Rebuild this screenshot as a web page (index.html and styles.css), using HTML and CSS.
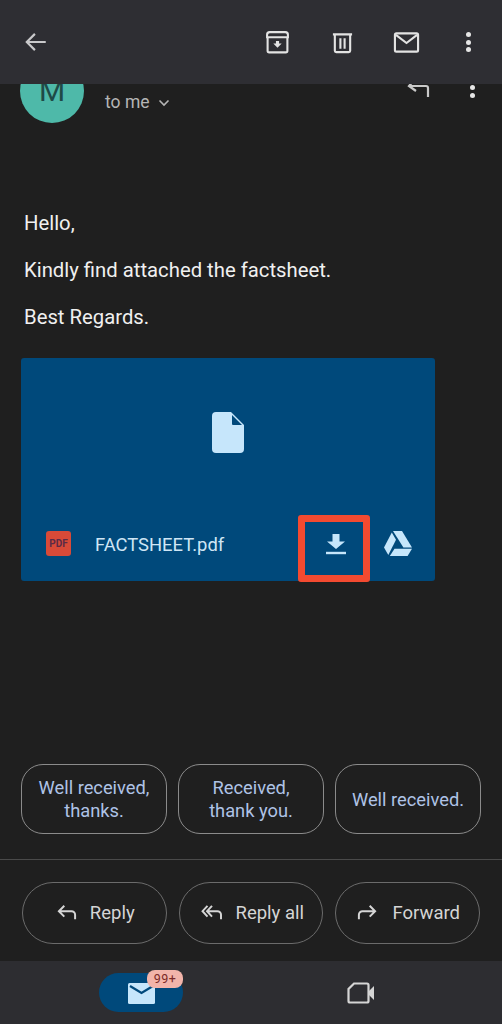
FILE: index.html
```html
<!DOCTYPE html>
<html lang="en">
<head>
<meta charset="utf-8">
<title>Email</title>
<link rel="stylesheet" href="styles.css">
</head>
<body>
<div class="app">
  <header class="topbar">
    <svg class="ic back" viewBox="0 0 24 24"><path d="M21 12H4M11 4.500L3.500 12l7.500 7.500" fill="none" stroke="#c9c9cb" stroke-width="2"/></svg>
    <div class="actions">
      <svg class="ic act-archive" viewBox="0 0 24 24"><path d="M2 8V4.500A2.500 2.500 0 0 1 4.500 2h15A2.500 2.500 0 0 1 22 4.500V8M2.500 7h19v13a1.500 1.500 0 0 1-1.500 1.500H4A1.500 1.500 0 0 1 2.500 20z" fill="none" stroke="#e3e3e3" stroke-width="2"/><path d="M10.500 10.500h3v2.500H16l-4 4-4-4h2.500z" fill="#e3e3e3"/></svg>
      <svg class="ic act-trash" viewBox="0 0 24 24"><path d="M2 3.500h20M4 3.500v17a1.500 1.500 0 0 0 1.500 1.500h13a1.500 1.500 0 0 0 1.500-1.500v-17M9.800 7.500v11M14.200 7.500v11" fill="none" stroke="#e3e3e3" stroke-width="2.200"/></svg>
      <svg class="ic act-mail" viewBox="0 0 28 24"><path d="M3.500 2.500h21A1.500 1.500 0 0 1 26 4v16a1.500 1.500 0 0 1-1.500 1.500h-21A1.500 1.500 0 0 1 2 20V4a1.500 1.500 0 0 1 1.500-1.500z" fill="none" stroke="#e3e3e3" stroke-width="2.200"/><path d="M3 4l11 8.500L25 4" fill="none" stroke="#e3e3e3" stroke-width="2.200"/></svg>
      <div class="dots"><i></i><i></i><i></i></div>
    </div>
  </header>

  <main class="thread">
    <div class="sender">
      <div class="avatar">M</div>
      <div class="to">to me <svg class="chev" viewBox="0 0 12 8"><path d="M1.500 1.500L6 6l4.500-4.500" fill="none" stroke="#b5b5b5" stroke-width="1.600"/></svg></div>
      <svg class="mini-reply" viewBox="0 0 24 22"><path d="M3 8h17a2 2 0 0 1 2 2v9M9 1L3 8l7 5" fill="none" stroke="#c9c9c9" stroke-width="2.200"/></svg>
      <div class="dots small"><i></i><i></i></div>
    </div>

    <div class="body-text">
      <p>Hello,</p>
      <p>Kindly find attached the factsheet.</p>
      <p>Best Regards.</p>
    </div>

    <section class="card">
      <div class="preview">
        <svg class="file" viewBox="0 0 32 41"><path d="M4 0h15l13 13v24a4 4 0 0 1-4 4H4a4 4 0 0 1-4-4V4a4 4 0 0 1 4-4z" fill="#c6e6fb"/><path d="M20 3v9a1 1 0 0 0 1 1h9z" fill="#00497b"/></svg>
      </div>
      <div class="card-foot">
        <div class="pdf">PDF</div>
        <div class="fname">FACTSHEET.pdf</div>
        <svg class="dl" viewBox="0 0 20 21"><path d="M6.500 0h7v7.500H19L10 15 1 7.500h5.500z" fill="#c6e6fb"/><path d="M0 19h20" stroke="#c6e6fb" stroke-width="2.400"/></svg>
        <svg class="drive" viewBox="0 0 28 25"><path d="M9 0h9l10 16.500h-8.600z" fill="#c6e6fb"/><path d="M7.800 1.500L12 8.800 4.300 24 0 16.500z" fill="#c6e6fb"/><path d="M10.500 17.800H28L23.600 25H5.800z" fill="#c6e6fb"/></svg>
        <div class="highlight"></div>
      </div>
    </section>
  </main>

  <div class="chips">
    <div class="chip">Well received,<br>thanks.</div>
    <div class="chip">Received,<br>thank you.</div>
    <div class="chip">Well received.</div>
  </div>

  <div class="replies">
    <div class="rbtn">
      <svg class="ric" viewBox="0 0 22 20"><path d="M8 2L2 8l6 6M2 8h14a4 4 0 0 1 4 4v5" fill="none" stroke="#d5d5d5" stroke-width="2.200"/></svg>
      <span>Reply</span>
    </div>
    <div class="rbtn">
      <svg class="ric wide" viewBox="0 0 24 20"><path d="M7 2L1.500 8 7 14M12 2L6.500 8l5.500 6M6.500 8H18a4 4 0 0 1 4 4v5" fill="none" stroke="#d5d5d5" stroke-width="2.200"/></svg>
      <span>Reply all</span>
    </div>
    <div class="rbtn fwd">
      <svg class="ric" viewBox="0 0 22 20"><path d="M14 2l6 6-6 6M20 8H6a4 4 0 0 0-4 4v5" fill="none" stroke="#d5d5d5" stroke-width="2.200"/></svg>
      <span>Forward</span>
    </div>
  </div>

  <nav class="bottom">
    <div class="slot">
      <div class="pill">
        <svg class="navmail" viewBox="0 0 27 21"><rect width="27" height="21" rx="1.500" fill="#c6e6fb"/><path d="M2 3l11.500 7L25 3" fill="none" stroke="#00497b" stroke-width="2.200"/></svg>
        <div class="badge">99+</div>
      </div>
    </div>
    <div class="slot">
      <svg class="meet" viewBox="0 0 28 22"><path d="M7 1.500h13a1.500 1.500 0 0 1 1.500 1.500v16a1.500 1.500 0 0 1-1.500 1.500H3A1.500 1.500 0 0 1 1.500 19V7z" fill="none" stroke="#d5d5d5" stroke-width="2.200"/><path d="M22 9l5-5v14l-5-5z" fill="#d5d5d5"/></svg>
    </div>
  </nav>
</div>
</body>
</html>
```

FILE: styles.css
```css
* { box-sizing: border-box; }
html, body { margin: 0; padding: 0; }
body { background: #1f1f1f; font-family: Roboto, "Liberation Sans", sans-serif; }
.app { width: 502px; height: 1024px; display: flex; flex-direction: column; overflow: hidden; background: #1f1f1f; }
.ic { display: block; }

.topbar { height: 84px; flex: none; background: #2e2e33; display: flex; align-items: center; justify-content: space-between; padding: 0 31px 0 23px; position: relative; z-index: 1; }
.back { width: 26px; height: 26px; }
.actions { display: flex; align-items: center; }
.act-archive { width: 25px; height: 25px; margin-right: 41px; }
.act-trash { width: 23px; height: 25px; margin-right: 39px; }
.act-mail { width: 27px; height: 25px; margin-right: 46px; }
.dots { display: flex; flex-direction: column; gap: 2.500px; width: 5px; }
.dots i { display: block; width: 5px; height: 5px; border-radius: 50%; background: #e6e6e6; }
.dots.small { gap: 3px; margin-left: 40px; margin-top: 26px; }

.thread { flex: 1; min-height: 0; padding: 0 0 0 21px; display: flex; flex-direction: column; }
.sender { display: flex; align-items: flex-start; margin-top: -25px; height: 64px; position: relative; flex: none; }
.avatar { width: 64px; height: 64px; margin-left: -1px; border-radius: 50%; background: #4eb9a9; color: #1e4a47; font-size: 30px; line-height: 64px; text-align: center; flex: none; }
.to { margin: 33px 0 0 21px; color: #b5b5b5; font-size: 17.500px; line-height: 20px; display: flex; align-items: center; gap: 8px; width: 301px; flex: none; }
.chev { width: 12px; height: 8px; margin-top: 2px; }
.mini-reply { width: 24px; height: 22px; margin-top: 19px; flex: none; }

.body-text { color: #f0f0f0; font-size: 20.300px; line-height: 24px; margin: 88px 0 0 3px; }
.body-text p { margin: 0 0 23px; }
.body-text p:last-child { margin-bottom: 0; }

.card { width: 414px; height: 223px; margin-top: 29px; background: #00497b; border-radius: 3px; display: flex; flex-direction: column; flex: none; }
.preview { height: 155px; display: flex; justify-content: center; padding-top: 54px; flex: none; }
.file { width: 32px; height: 41px; display: block; }
.card-foot { flex: 1; display: flex; align-items: flex-start; padding: 18px 0 0 25px; position: relative; }
.pdf { width: 25px; height: 25px; border-radius: 3px; background: #d84a38; color: #5b2b46; font-size: 10px; font-weight: 700; line-height: 25px; text-align: center; flex: none; }
.fname { margin: 1px 0 0 24px; width: 216px; color: #cfe6f5; font-size: 18.400px; line-height: 25px; flex: none; }
.dl { width: 20px; height: 21px; flex: none; margin: 3px 0 0 15px; display: block; }
.drive { width: 28px; height: 25px; flex: none; margin: 0 0 0 38px; display: block; }
.highlight { position: absolute; left: 277px; top: 2px; width: 72px; height: 67px; border: 7px solid #f34a30; border-radius: 3px; }

.chips { display: flex; gap: 11px; padding: 0 21px; margin-bottom: 25px; flex: none; }
.chip { width: 146px; height: 70px; border: 1.500px solid #8b8b8b; border-radius: 22px; color: #afc3e6; font-size: 18.300px; line-height: 23px; display: flex; align-items: center; justify-content: center; text-align: center; }
.replies { border-top: 1.500px solid #4a4a4a; height: 102px; flex: none; display: flex; gap: 12px; padding: 22px 22px 0; }
.rbtn { width: 144.500px; height: 62px; border: 1.500px solid #6b6b6b; border-radius: 31px; display: flex; align-items: center; justify-content: center; gap: 13px; color: #d5d5d5; font-size: 18.500px; padding-left: 3px; }
.ric { width: 20px; height: 18px; display: block; flex: none; }
.ric.wide { width: 22px; }
.fwd { gap: 15px; }

.bottom { height: 63px; flex: none; background: #2d2d31; display: grid; grid-template-columns: 282px 1fr; }
.slot { display: flex; align-items: center; justify-content: center; }
.slot:last-child { justify-content: flex-start; padding-left: 65px; }
.pill { width: 84px; height: 39px; border-radius: 20px; background: #00497b; position: relative; display: flex; align-items: center; justify-content: center; }
.navmail { width: 27px; height: 21px; display: block; margin-top: 2px; }
.badge { position: absolute; left: 48px; top: -3px; width: 36px; height: 18px; border-radius: 8px; background: #f2b4aa; color: #7b2a28; font-size: 12.500px; line-height: 18px; text-align: center; letter-spacing: .5px; }
.meet { width: 28px; height: 22px; display: block; }
```
